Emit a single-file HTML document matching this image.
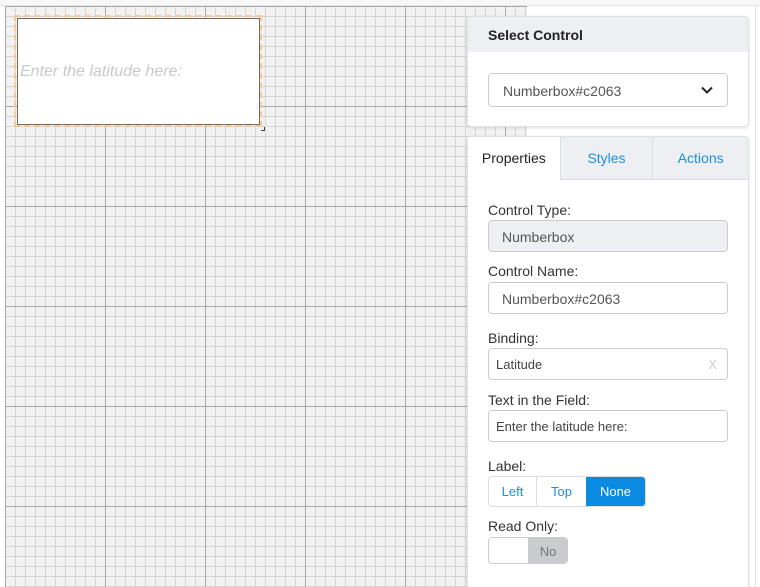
<!DOCTYPE html>
<html><head><style>
*{box-sizing:border-box;margin:0;padding:0}
html,body{width:760px;height:587px;overflow:hidden}
body{background:#fff;font-family:"Liberation Sans",sans-serif;position:relative;color:#333}
.top{position:absolute;left:0;top:0;width:760px;height:6px;background:#f7f7f7;border-bottom:1px solid #e4e4e4}
.grid{position:absolute;left:5px;top:6px;width:522px;height:581px;background-color:#f2f2f2;
background-image:
linear-gradient(to right,#a8a8a8 1px,transparent 1px),
linear-gradient(to bottom,#a8a8a8 1px,transparent 1px),
linear-gradient(to right,#d4d4d4 1px,transparent 1px),
linear-gradient(to bottom,#d4d4d4 1px,transparent 1px);
background-size:100px 100px,100px 100px,10px 10px,10px 10px;background-position:0 0}
.rl{position:absolute;left:755px;top:6px;width:1px;height:581px;background:#e8e0d0}
.ctrl{position:absolute;left:14px;top:15px;width:248px;height:112px;border:2px dashed #f7c99a}
.ctrl .in{position:absolute;left:1px;top:1px;width:243px;height:107px;background:#fff;border:1px solid #7a6a5a}
.ctrl .ph{position:absolute;left:4px;top:46px;font-style:italic;font-size:16px;color:#c8c8c8}
.panel{position:absolute;left:467px;background:#fff;border:1px solid #e0e0e0;border-radius:4px;box-shadow:0 1px 3px rgba(0,0,0,.12)}
.hd{height:35px;background:#eeeff2;font-weight:bold;font-size:14px;padding:10px 0 0 20px;color:#222}
.sel{position:absolute;left:20px;top:55px;width:240px;height:34px;border:1px solid #ccc;border-radius:4px;font-size:14px;color:#555;padding:9px 0 0 14px}
.tabs{display:flex;height:43px;background:#eeeff2;border-bottom:1px solid #ddd}
.tab{height:43px;font-size:14px;color:#1a8fe0;padding-top:13px;text-align:center;border-left:1px solid #ddd}
.lbl{position:absolute;left:20px;font-size:14px;color:#333}
.fld{position:absolute;left:20px;width:240px;height:32px;border:1px solid #ccc;border-radius:4px;font-size:14px;color:#555;padding:8px 0 0 13px}
</style></head><body>
<div class="top"></div>
<div class="grid"></div>
<div class="rl"></div>
<div class="ctrl"><div class="in"></div><div class="ph">Enter the latitude here:</div></div>
<div style="position:absolute;left:261px;top:127px;width:4px;height:4px;border-right:1px solid #444;border-bottom:1px solid #444"></div>

<div class="panel" style="top:16px;width:282px;height:111px">
<div class="hd">Select Control</div>
<div class="sel" style="left:20px;top:56px">Numberbox#c2063
<svg style="position:absolute;right:14px;top:12px" width="12" height="8" viewBox="0 0 12 8"><path d="M1 1.5L6 6.5L11 1.5" stroke="#222" stroke-width="2" fill="none"/></svg></div>
</div>

<div class="panel" style="top:136px;width:282px;height:460px">
<div class="tabs">
<div class="tab" style="width:92px;background:#fff;color:#222;border-left:none;border-bottom:1px solid #fff;height:44px">Properties</div>
<div class="tab" style="width:93px">Styles</div>
<div class="tab" style="width:96px">Actions</div>
</div>
<div class="lbl" style="top:65px">Control Type:</div>
<div class="fld" style="top:83px;background:#eeeff2">Numberbox</div>
<div class="lbl" style="top:126px">Control Name:</div>
<div class="fld" style="top:145px">Numberbox#c2063</div>
<div class="lbl" style="top:193px">Binding:</div>
<div class="fld" style="top:211px;padding-left:7px;font-size:13px;color:#444">Latitude<span style="position:absolute;right:10px;top:8px;color:#ccc">X</span></div>
<div class="lbl" style="top:255px">Text in the Field:</div>
<div class="fld" style="top:273px;padding-left:7px;font-size:13px;color:#444">Enter the latitude here:</div>
<div class="lbl" style="top:321px">Label:</div>
<div style="position:absolute;left:20px;top:339px;width:158px;height:31px;border:1px solid #ddd;border-radius:4px;display:flex;font-size:13px;overflow:hidden">
<div style="width:48px;color:#1a8fe0;text-align:center;padding-top:7px;border-right:1px solid #ddd">Left</div>
<div style="width:49px;color:#1a8fe0;text-align:center;padding-top:7px">Top</div>
<div style="flex:1;background:#0a8ae0;color:#fff;text-align:center;padding-top:7px">None</div>
</div>
<div class="lbl" style="top:381px">Read Only:</div>
<div style="position:absolute;left:20px;top:400px;width:80px;height:27px;border:1px solid #ccc;border-radius:4px;overflow:hidden">
<div style="position:absolute;left:39px;top:0;width:40px;height:27px;background:#c9cbce;color:#777;font-size:13px;text-align:center;padding-top:6px">No</div></div>
</div>
</body></html>
